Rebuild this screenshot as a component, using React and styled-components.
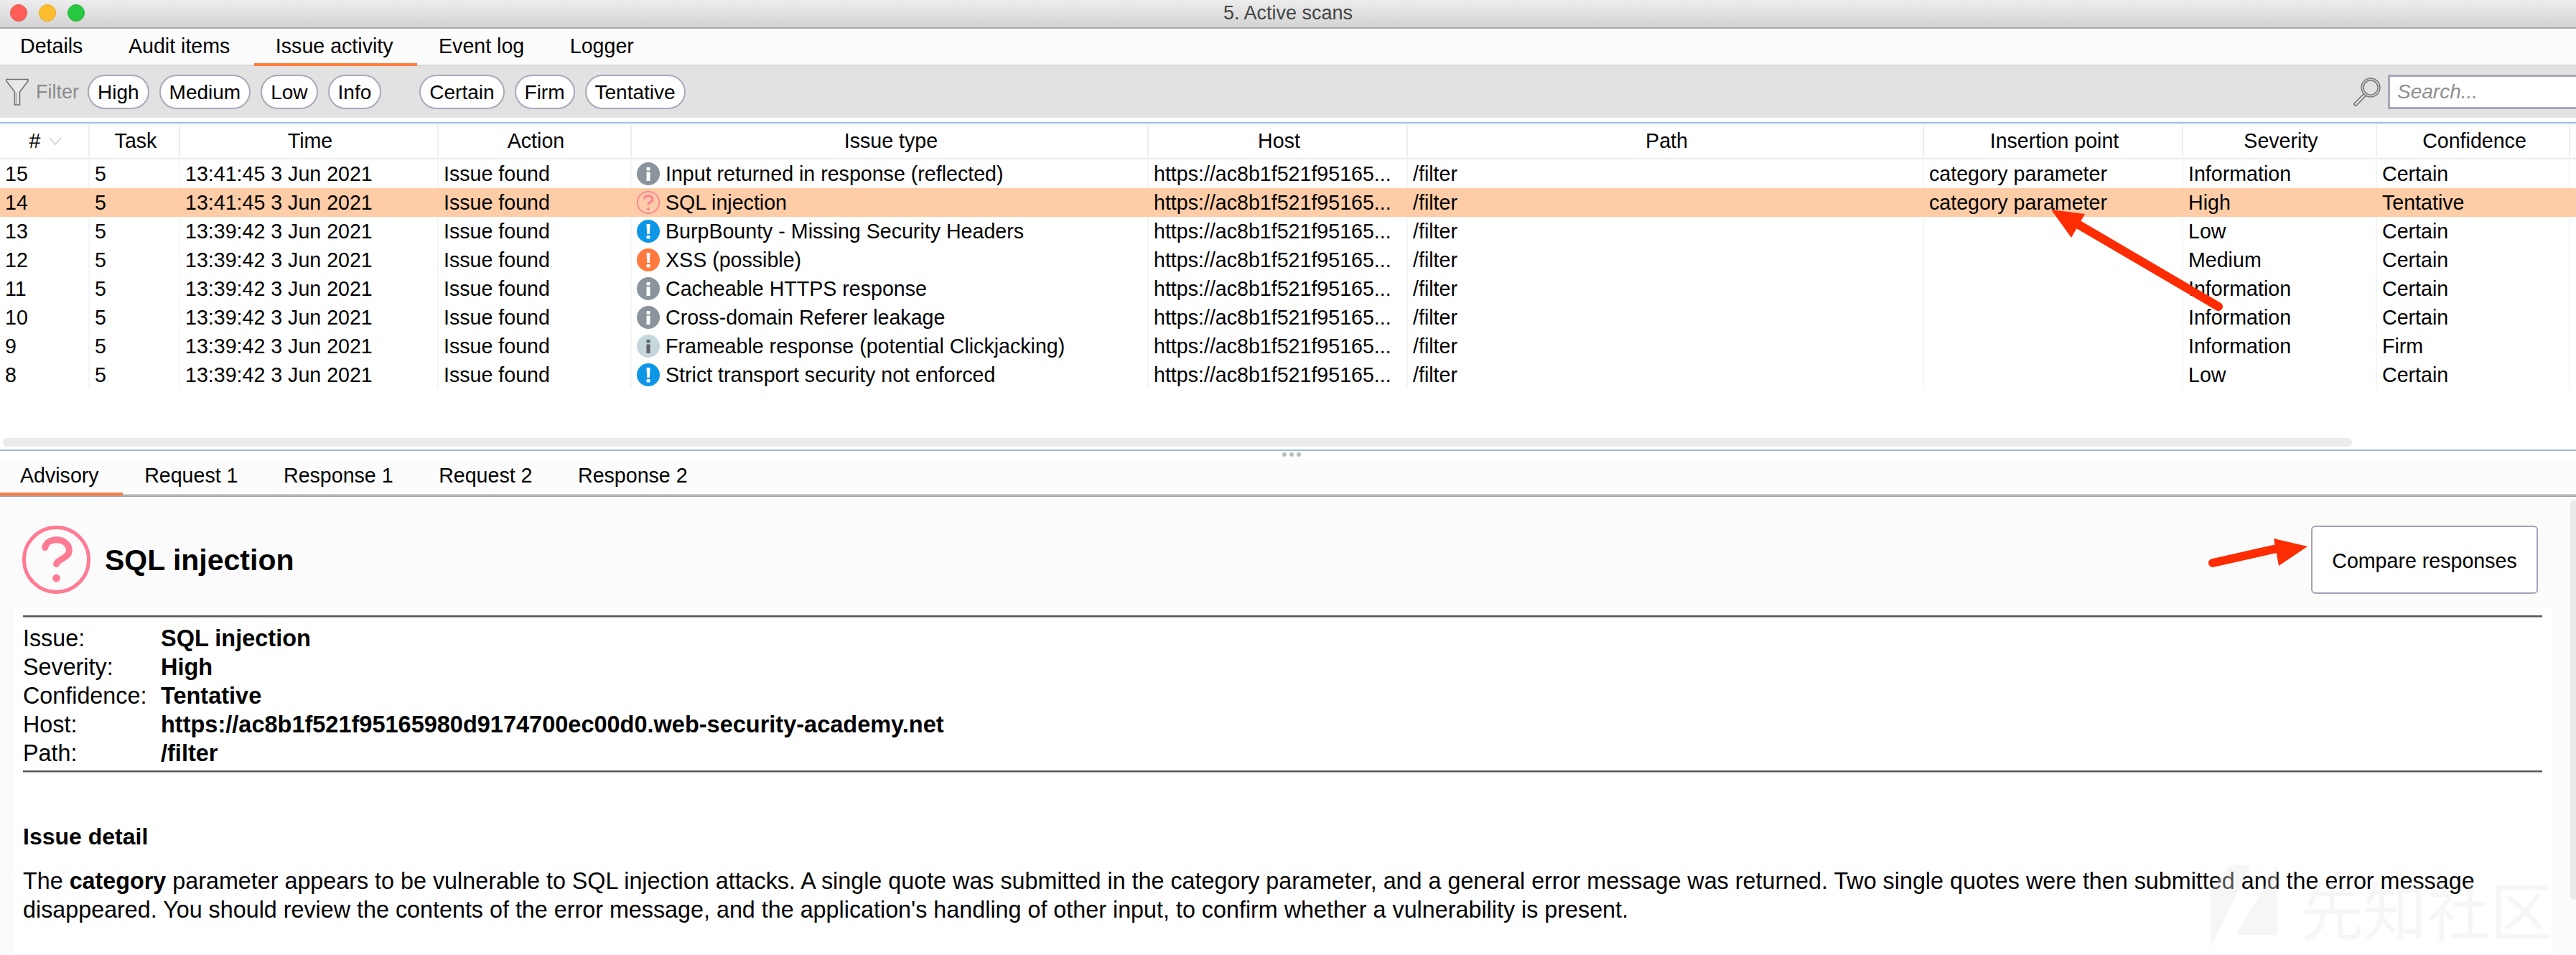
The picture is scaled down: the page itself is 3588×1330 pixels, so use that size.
import React from "react";
import styled, { createGlobalStyle } from "styled-components";

const GlobalStyle = createGlobalStyle`
  html, body {
    margin: 0;
    padding: 0;
    background: #fff;
  }
  * {
    box-sizing: border-box;
  }
`;

const Window = styled.div`
  position: relative;
  display: flex;
  flex-direction: column;
  width: 3588px;
  height: 1330px;
  overflow: hidden;
  background: #fff;
  color: #000;
  font-family: "Liberation Sans", Arial, sans-serif;
  font-size: 28.6px;
`;

const TitleBar = styled.div`
  position: relative;
  display: flex;
  align-items: center;
  justify-content: center;
  flex: none;
  height: 40px;
  padding-bottom: 2px;
  background: linear-gradient(#ededed, #d3d3d3);
  border-bottom: 2px solid #a9a9a9;
  color: #444;
  font-size: 27px;
`;

const Lights = styled.div`
  position: absolute;
  top: 6px;
  left: 14px;
  display: flex;
  gap: 16px;
`;

const Light = styled.span`
  width: 24px;
  height: 24px;
  border-radius: 50%;
  background: ${(p) => p.$color};
  border: 1px solid ${(p) => p.$edge};
`;

const TabBar = styled.div`
  display: flex;
  flex: none;
  height: ${(p) => p.$height}px;
  padding-left: 0;
  background: #fcfcfc;
  border-bottom: 2px solid ${(p) => p.$line};
  box-shadow: ${(p) => (p.$double ? "inset 0 -2px 0 #cdcdcd" : "none")};
`;

const Tab = styled.div`
  display: flex;
  align-items: center;
  height: ${(p) => p.$height}px;
  padding: 0 33.5px 0 30px;
  border-bottom: 4px solid ${(p) => (p.$active ? "#ff7b3c" : "transparent")};
  margin-left: ${(p) => (p.$first ? "-2px" : "0")};
`;

const FilterBar = styled.div`
  display: flex;
  align-items: center;
  flex: none;
  height: 72px;
  margin-bottom: 6px;
  padding-left: 8px;
  background: #e2e2e2;
`;

const FilterLabel = styled.span`
  margin: 0 12px 0 10px;
  color: #8b8b8b;
  font-size: 27px;
`;

const PillGroup = styled.div`
  display: flex;
  gap: 14px;
  margin-right: 53px;
`;

const Pill = styled.div`
  display: flex;
  align-items: center;
  height: 48px;
  padding: 2px 12px 0;
  background: #fff;
  border: 2px solid #a8a9ba;
  border-radius: 24px;
  font-size: 28px;
`;

const SearchArea = styled.div`
  display: flex;
  align-items: center;
  gap: 9px;
  margin-left: auto;
  margin-right: -4px;
`;

const SearchInput = styled.input`
  width: 266px;
  height: 48px;
  padding: 0 10px;
  background: #fff;
  border: 3px solid #a6a7b9;
  border-radius: 0;
  outline: none;
  font-family: inherit;
  font-size: 28px;
  &::placeholder {
    color: #8f8f8f;
    font-style: italic;
    opacity: 1;
  }
`;

const TablePane = styled.div`
  display: flex;
  flex-direction: column;
  flex: none;
  height: 458px;
  border-top: 2px solid #9cbde0;
  border-bottom: 2px solid #9cbde0;
`;

const columns = "125px 126px 360px 269px 720px 361px 719px 361px 270px 269px";

const HeadRow = styled.div`
  display: grid;
  grid-template-columns: ${columns};
  align-items: center;
  flex: none;
  height: 50px;
  border-bottom: 2px solid #ededed;
`;

const HeadCell = styled.div`
  display: flex;
  align-items: center;
  justify-content: center;
  gap: 12px;
  height: 44px;
  padding-left: 4px;
  border-right: 2px solid #ededed;
`;

const Row = styled.div`
  display: grid;
  grid-template-columns: ${columns};
  flex: none;
  height: 40px;
  background: ${(p) => (p.$selected ? "#fecda7" : "transparent")};
`;

const Cell = styled.div`
  display: flex;
  align-items: center;
  gap: 8px;
  padding-left: 7px;
  border-right: 2px solid ${(p) => (p.$selected ? "transparent" : "#f5f5f5")};
  white-space: nowrap;
  overflow: hidden;
`;

const HScroll = styled.div`
  width: 3272px;
  height: 12px;
  margin: 68px 0 0 4px;
  background: #ebebeb;
  border-radius: 6px;
`;

const Splitter = styled.div`
  display: flex;
  align-items: center;
  justify-content: center;
  gap: 4px;
  flex: none;
  height: 10px;
  padding-left: 10px;
`;

const Dot = styled.span`
  width: 6px;
  height: 6px;
  border-radius: 50%;
  background: #bbb;
`;

const Body = styled.div`
  display: flex;
  flex: 1;
  min-height: 0;
  background: #fbfbfb;
`;

const Content = styled.div`
  display: flex;
  flex-direction: column;
  width: 3580px;
`;

const VScroll = styled.div`
  flex: none;
  width: 8px;
  height: 557px;
  margin-top: 4px;
  background: #ebebeb;
  border-radius: 6px 0 0 6px;
`;

const Header = styled.div`
  display: flex;
  align-items: center;
  justify-content: space-between;
  flex: none;
  height: 155px;
  padding: 40px 45px 20px 31px;
`;

const Heading = styled.div`
  display: flex;
  align-items: center;
  gap: 20px;
`;

const Title = styled.h1`
  margin: 2px 0 0;
  font-size: 41px;
  font-weight: bold;
`;

const CompareButton = styled.button`
  width: 316px;
  height: 95px;
  padding: 3px 0 0;
  background: #fff;
  border: 2px solid #a2a3b5;
  border-radius: 6px;
  font-family: inherit;
  font-size: 28.6px;
  color: #000;
`;

const Sheet = styled.div`
  flex: 1;
  margin: 0 24px 0 20px;
  padding: 10px 15px 0 12px;
  background: #fff;
  font-size: 32.3px;
`;

const Rule = styled.div`
  height: 4px;
  border-top: 2px solid #555;
  border-bottom: 2px solid #cbcbcb;
`;

const Meta = styled.div`
  display: grid;
  grid-template-columns: 192px 1fr;
  grid-auto-rows: 40px;
  align-items: center;
  margin: 8px 0 4px;
`;

const MetaValue = styled.b`
  font-size: 32.5px;
`;

const SectionTitle = styled.div`
  margin-top: 68px;
  font-size: 32px;
  font-weight: bold;
  line-height: 40px;
`;

const Paragraph = styled.p`
  margin: 22px 0 0;
  line-height: 40px;
`;

const Annotation = styled.svg`
  position: absolute;
  top: 0;
  left: 0;
  pointer-events: none;
`;

const Watermark = styled.div`
  position: absolute;
  right: 32px;
  bottom: 16px;
  color: rgba(230, 230, 230, 0.35);
  font-family: "Noto Sans CJK SC", sans-serif;
  font-size: 88px;
  line-height: 100px;
  white-space: nowrap;
`;

const FunnelIcon = () => (
  <svg width="32" height="38" viewBox="0 0 32 38">
    <path d="M1 1.5H31V4L19.5 19V37H12.5V19L1 4Z" fill="#e9e9e9" stroke="#6d6d6d" strokeWidth="1.5" />
    <path d="M15 20V36" stroke="#bdbdbd" strokeWidth="2" />
  </svg>
);

const MagnifierIcon = () => (
  <svg width="40" height="40" viewBox="0 0 40 40">
    <path d="M17 24L4 37" stroke="#6e6e6e" strokeWidth="5.5" strokeLinecap="round" />
    <path d="M17 24L4 37" stroke="#ddd" strokeWidth="2.5" strokeLinecap="round" />
    <circle cx="25" cy="14" r="11.5" fill="none" stroke="#7b7b7b" strokeWidth="4.5" />
    <circle cx="25" cy="14" r="11.5" fill="none" stroke="#cfcfcf" strokeWidth="1.5" />
  </svg>
);

const SortIcon = () => (
  <svg width="18" height="11" viewBox="0 0 18 11">
    <path d="M1 1L9 10L17 1" fill="none" stroke="#cfcfcf" strokeWidth="1.6" />
  </svg>
);

const QuestionIcon = ({ size }) => (
  <svg width={size} height={size} viewBox="0 0 96 96">
    <circle cx="48" cy="48" r="45.5" fill="none" stroke="#ff7a93" strokeWidth="5" />
    <path
      d="M32 31C33 24 40 20 48 20C58 20 66 26 66 35C66 44 55 46 50 51L48 54"
      fill="none"
      stroke="#ff7a93"
      strokeWidth="9"
      strokeLinecap="round"
    />
    <circle cx="48" cy="74" r="5.5" fill="#ff7a93" />
  </svg>
);

const InfoIcon = ({ color, mark }) => (
  <svg width="32" height="32" viewBox="0 0 32 32">
    <circle cx="16" cy="16" r="16" fill={color} />
    <rect x="13.5" y="7" width="5" height="4.5" rx="1" fill={mark} />
    <rect x="13.5" y="13.5" width="5" height="12.5" fill={mark} />
  </svg>
);

const AlertIcon = ({ color }) => (
  <svg width="32" height="32" viewBox="0 0 32 32">
    <circle cx="16" cy="16" r="16" fill={color} />
    <path d="M13.5 6H18.5L17.8 20H14.2Z" fill="#fff" />
    <rect x="13.5" y="22" width="5" height="4.5" rx="1" fill="#fff" />
  </svg>
);

const issueIcons = {
  info: <InfoIcon color="#8b949d" mark="#fff" />,
  firm: <InfoIcon color="#c5d7dd" mark="#5c6468" />,
  question: <QuestionIcon size={32} />,
  low: <AlertIcon color="#0e96e6" />,
  medium: <AlertIcon color="#ff7a3c" />,
};

const heads = ["#", "Task", "Time", "Action", "Issue type", "Host", "Path", "Insertion point", "Severity", "Confidence"];

const host = "https://ac8b1f521f95165...";

const issues = [
  { id: 15, time: "13:41:45", icon: "info", type: "Input returned in response (reflected)", point: "category parameter", severity: "Information", confidence: "Certain" },
  { id: 14, time: "13:41:45", icon: "question", type: "SQL injection", point: "category parameter", severity: "High", confidence: "Tentative", selected: true },
  { id: 13, time: "13:39:42", icon: "low", type: "BurpBounty - Missing Security Headers", severity: "Low", confidence: "Certain" },
  { id: 12, time: "13:39:42", icon: "medium", type: "XSS (possible)", severity: "Medium", confidence: "Certain" },
  { id: 11, time: "13:39:42", icon: "info", type: "Cacheable HTTPS response", severity: "Information", confidence: "Certain" },
  { id: 10, time: "13:39:42", icon: "info", type: "Cross-domain Referer leakage", severity: "Information", confidence: "Certain" },
  { id: 9, time: "13:39:42", icon: "firm", type: "Frameable response (potential Clickjacking)", severity: "Information", confidence: "Firm" },
  { id: 8, time: "13:39:42", icon: "low", type: "Strict transport security not enforced", severity: "Low", confidence: "Certain" },
];

const meta = [
  ["Issue:", "SQL injection"],
  ["Severity:", "High"],
  ["Confidence:", "Tentative"],
  ["Host:", "https://ac8b1f521f95165980d9174700ec00d0.web-security-academy.net"],
  ["Path:", "/filter"],
];

const App = () => {
  return (
    <Window>
      <GlobalStyle />
      <TitleBar>
        <Lights>
          <Light $color="#ff5f57" $edge="#e5524b" />
          <Light $color="#ffbd2e" $edge="#e5a827" />
          <Light $color="#28c940" $edge="#22b336" />
        </Lights>
        5. Active scans
      </TitleBar>

      <TabBar $height={52} $line="#d8d8d8">
        <Tab $height={52} $first>Details</Tab>
        <Tab $height={52}>Audit items</Tab>
        <Tab $height={52} $active>Issue activity</Tab>
        <Tab $height={52}>Event log</Tab>
        <Tab $height={52}>Logger</Tab>
      </TabBar>

      <FilterBar>
        <FunnelIcon />
        <FilterLabel>Filter</FilterLabel>
        <PillGroup>
          <Pill>High</Pill>
          <Pill>Medium</Pill>
          <Pill>Low</Pill>
          <Pill>Info</Pill>
        </PillGroup>
        <PillGroup>
          <Pill>Certain</Pill>
          <Pill>Firm</Pill>
          <Pill>Tentative</Pill>
        </PillGroup>
        <SearchArea>
          <MagnifierIcon />
          <SearchInput placeholder="Search..." />
        </SearchArea>
      </FilterBar>

      <TablePane>
        <HeadRow>
          {heads.map((h, i) => (
            <HeadCell key={h}>
              {h}
              {i === 0 && <SortIcon />}
            </HeadCell>
          ))}
        </HeadRow>
        {issues.map((r) => {
          const cells = [
            r.id,
            5,
            `${r.time} 3 Jun 2021`,
            "Issue found",
            <>
              {issueIcons[r.icon]}
              {r.type}
            </>,
            host,
            "/filter",
            r.point,
            r.severity,
            r.confidence,
          ];
          return (
            <Row key={r.id} $selected={r.selected}>
              {cells.map((c, i) => (
                <Cell key={i} $selected={r.selected}>
                  {c}
                </Cell>
              ))}
            </Row>
          );
        })}
        <HScroll />
      </TablePane>

      <Splitter>
        <Dot />
        <Dot />
        <Dot />
      </Splitter>

      <TabBar $height={54} $line="#a3a5b3" $double>
        <Tab $height={52} $first $active>Advisory</Tab>
        <Tab $height={52}>Request 1</Tab>
        <Tab $height={52}>Response 1</Tab>
        <Tab $height={52}>Request 2</Tab>
        <Tab $height={52}>Response 2</Tab>
      </TabBar>

      <Body>
        <Content>
          <Header>
            <Heading>
              <QuestionIcon size={95} />
              <Title>SQL injection</Title>
            </Heading>
            <CompareButton>Compare responses</CompareButton>
          </Header>
          <Sheet>
            <Rule />
            <Meta>
              {meta.map(([label, value]) => (
                <React.Fragment key={label}>
                  <span>{label}</span>
                  <MetaValue>{value}</MetaValue>
                </React.Fragment>
              ))}
            </Meta>
            <Rule />
            <SectionTitle>Issue detail</SectionTitle>
            <Paragraph>
              The <b>category</b> parameter appears to be vulnerable to SQL injection attacks. A single quote was
              submitted in the category parameter, and a general error message was returned. Two single quotes were
              then submitted and the error message disappeared. You should review the contents of the error message,
              and the application's handling of other input, to confirm whether a vulnerability is present.
            </Paragraph>
          </Sheet>
        </Content>
        <VScroll />
      </Body>

      <Annotation width="3588" height="1330" viewBox="0 0 3588 1330">
        <path d="M3090 427L2892 311" stroke="#fe2c02" strokeWidth="12" strokeLinecap="round" />
        <path d="M2857 292L2904 298L2885 331Z" fill="#fe2c02" />
        <path d="M3082 784L3180 762" stroke="#fe2c02" strokeWidth="12" strokeLinecap="round" />
        <path d="M3214 761L3167 750L3174 788Z" fill="#fe2c02" />
        <path d="M3079 1240V1320L3135 1205L3106 1205Z" fill="rgba(230,230,230,0.35)" />
        <path d="M3172 1205V1302H3114Z" fill="rgba(230,230,230,0.35)" />
      </Annotation>
      <Watermark>先知社区</Watermark>
    </Window>
  );
};

export default App;
